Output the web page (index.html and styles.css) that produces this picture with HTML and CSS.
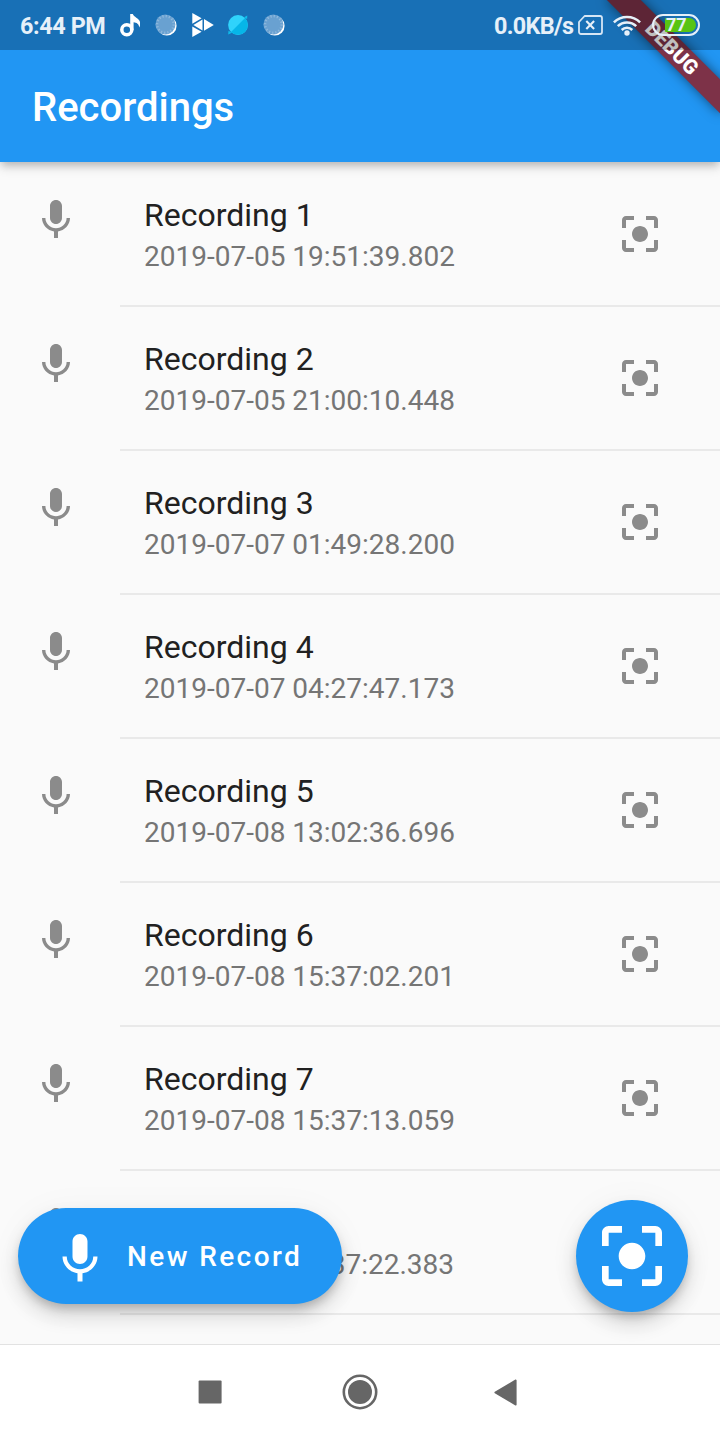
FILE: index.html
```
<!DOCTYPE html>
<html lang="en">
<head>
<meta charset="utf-8">
<title>Recordings</title>
<link rel="stylesheet" href="styles.css">
</head>
<body>
<svg class="defs" aria-hidden="true">
  <symbol id="mic" viewBox="0 0 24 24"><path d="M12 14c1.66 0 2.99-1.34 2.99-3L15 5c0-1.66-1.34-3-3-3S9 3.34 9 5v6c0 1.66 1.34 3 3 3zm5.3-3c0 3-2.54 5.1-5.3 5.1S6.7 14 6.7 11H5c0 3.41 2.72 6.23 6 6.72V21h2v-3.28c3.28-.48 6-3.3 6-6.72h-1.7z"/></symbol>
  <symbol id="focus" viewBox="0 0 24 24"><path d="M12 8c-2.21 0-4 1.79-4 4s1.79 4 4 4 4-1.79 4-4-1.79-4-4-4zm-7 7H3v4c0 1.1.9 2 2 2h4v-2H5v-4zM5 5h4V3H5c-1.1 0-2 .9-2 2v4h2V5zm14-2h-4v2h4v4h2V5c0-1.1-.9-2-2-2zm0 16h-4v2h4c1.1 0 2-.9 2-2v-4h-2v4z"/></symbol>
  <symbol id="moon" viewBox="0 0 22 22">
    <circle cx="11.8" cy="11.8" r="9.8" fill="#fff"/>
    <circle cx="10.4" cy="10.4" r="10" fill="#69a1d1"/>
    <circle cx="10.4" cy="10.4" r="8.3" fill="none" stroke="#8fb9dd" stroke-width="2.4" stroke-dasharray="1.2 2.06"/>
  </symbol>
</svg>
<div class="screen">
  <header class="top">
    <div class="status">
      <div class="status-side">
        <span class="clock">6:44 PM</span>
        <svg class="ic-note" viewBox="0 0 20 23"><circle cx="6.8" cy="15.7" r="5" fill="none" stroke="#fff" stroke-width="3.5"/><path d="M10.2 0h2.6c1 3.4 7.4 4.3 7.4 9.4 0 1.7-.3 3-.9 4.2-.4-3.6-2.6-5-5.7-5.3v8h-3.4z" fill="#fff"/></svg>
        <svg class="ic-moon"><use href="#moon"/></svg>
        <svg class="ic-play" viewBox="0 0 22 24"><path d="M.3 0 9.6 5.2.3 10.7zM.3 13.4l9.3 5.3L.3 24zM10.5 6.5v11L1.4 12zM12 6.1 21.8 12 12 17.8z" fill="#fff"/></svg>
        <svg class="ic-planet" viewBox="0 0 20 20"><circle cx="10" cy="10" r="9.9" fill="#2fd3fb"/><path d="M17 3a9.9 9.9 0 0 1-14 14z" fill="#06b6e8"/><path d="M16 2.2 19.3.4l-.2 3.7zM4 17.8.2 19.6l.3-3.8z" fill="#0fbdec"/></svg>
        <svg class="ic-moon"><use href="#moon"/></svg>
      </div>
      <div class="status-side">
        <span class="speed">0.0KB/s</span>
        <svg class="ic-sim" viewBox="0 0 25 20"><path d="M6.6 1H22a2 2 0 0 1 2 2v14a2 2 0 0 1-2 2H3a2 2 0 0 1-2-2V7z" fill="none" stroke="#d6e6f5" stroke-width="1.8" stroke-linejoin="round"/><path d="m8.3 6 7.8 8m0-8-7.8 8" stroke="#e6f0f9" stroke-width="2.1"/></svg>
        <svg class="ic-wifi" viewBox="0 0 28 21"><g fill="none" stroke="#e6f0f9" stroke-width="2.5"><path d="M.9 7.4a18.5 18.5 0 0 1 26.2 0"/><path d="M4.8 11.2a13 13 0 0 1 18.4 0"/><path d="M8.7 15a7.5 7.5 0 0 1 10.6 0"/></g><circle cx="14" cy="18" r="2.7" fill="#e6f0f9"/></svg>
        <div class="battery"><span class="battery-fill">77</span></div>
      </div>
    </div>
    <h1 class="title">Recordings</h1>
    <div class="banner-clip"><div class="banner">DEBUG</div></div>
    <div class="status-tint"></div>
  </header>

  <main class="list">
    <div class="row"><svg class="mic"><use href="#mic"/></svg><div class="body"><div class="texts"><div class="name">Recording 1</div><div class="date">2019-07-05 19:51:39.802</div></div><svg class="focus"><use href="#focus"/></svg></div></div>
    <div class="row"><svg class="mic"><use href="#mic"/></svg><div class="body"><div class="texts"><div class="name">Recording 2</div><div class="date">2019-07-05 21:00:10.448</div></div><svg class="focus"><use href="#focus"/></svg></div></div>
    <div class="row"><svg class="mic"><use href="#mic"/></svg><div class="body"><div class="texts"><div class="name">Recording 3</div><div class="date">2019-07-07 01:49:28.200</div></div><svg class="focus"><use href="#focus"/></svg></div></div>
    <div class="row"><svg class="mic"><use href="#mic"/></svg><div class="body"><div class="texts"><div class="name">Recording 4</div><div class="date">2019-07-07 04:27:47.173</div></div><svg class="focus"><use href="#focus"/></svg></div></div>
    <div class="row"><svg class="mic"><use href="#mic"/></svg><div class="body"><div class="texts"><div class="name">Recording 5</div><div class="date">2019-07-08 13:02:36.696</div></div><svg class="focus"><use href="#focus"/></svg></div></div>
    <div class="row"><svg class="mic"><use href="#mic"/></svg><div class="body"><div class="texts"><div class="name">Recording 6</div><div class="date">2019-07-08 15:37:02.201</div></div><svg class="focus"><use href="#focus"/></svg></div></div>
    <div class="row"><svg class="mic"><use href="#mic"/></svg><div class="body"><div class="texts"><div class="name">Recording 7</div><div class="date">2019-07-08 15:37:13.059</div></div><svg class="focus"><use href="#focus"/></svg></div></div>
    <div class="row"><svg class="mic"><use href="#mic"/></svg><div class="body"><div class="texts"><div class="name">&nbsp;</div><div class="date date-end">37:22.383</div></div></div></div>
  </main>

  <button class="fab-new"><svg class="fab-mic"><use href="#mic"/></svg><span class="fab-label">New Record</span></button>
  <button class="fab-focus" aria-label="Focus"><svg class="fab-focus-icon"><use href="#focus"/></svg></button>

  <nav class="nav">
    <svg class="nav-square" viewBox="0 0 24 24"><rect x=".6" y=".5" width="23" height="23" rx="1" fill="#666"/></svg>
    <svg class="nav-circle" viewBox="0 0 36 36"><circle cx="18" cy="18" r="16.2" fill="none" stroke="#666" stroke-width="2.6"/><circle cx="18" cy="18" r="12" fill="#666"/></svg>
    <svg class="nav-back" viewBox="0 0 23 27"><path d="M21.8 1.3v24.4L1.2 13.5z" fill="#666" stroke="#666" stroke-width="1.6" stroke-linejoin="round"/></svg>
  </nav>
</div>
</body>
</html>
```
FILE: styles.css
```
* { box-sizing: border-box; }
body { margin: 0; font-family: Roboto, "Noto Sans", sans-serif; }
svg { display: block; flex: none; }
.defs { position: absolute; width: 0; height: 0; }
.screen {
  position: relative;
  display: flex;
  flex-direction: column;
  width: 720px;
  height: 1440px;
  overflow: hidden;
  background: #fafafa;
}

/* App bar and status bar */
.top {
  position: relative;
  z-index: 1;
  flex: none;
  height: 162px;
  background: #2196f3;
  box-shadow: 0 4px 8px -2px rgba(0,0,0,.2), 0 6px 10px rgba(0,0,0,.12);
}
.status {
  position: relative;
  z-index: 3;
  display: flex;
  justify-content: space-between;
  height: 50px;
  padding: 0 20px;
  color: #e6f0f9;
}
.status-side { display: flex; align-items: center; height: 50px; }
.clock, .speed { font-size: 23.4px; font-weight: 700; line-height: 28px; white-space: nowrap; padding-top: 2px; }
.clock { width: 100px; letter-spacing: -.4px; }
.speed { width: 84px; letter-spacing: -.7px; }
.ic-note { width: 20px; height: 23px; }
.ic-moon { width: 22px; height: 22px; margin-left: 15px; }
.ic-play { width: 22px; height: 24px; margin-left: 15px; }
.ic-planet { width: 20px; height: 20px; margin-left: 14px; }
.ic-sim { width: 25px; height: 20px; }
.ic-wifi { width: 28px; height: 21px; margin-left: 10px; }
.battery {
  width: 48px;
  height: 22px;
  margin-left: 11px;
  padding: 2px;
  border: 2px solid #e6f0f9;
  border-radius: 11px;
  margin-top: -1px;
}
.battery-fill {
  display: block;
  height: 14px;
  margin-left: 9px;
  padding-left: 1px;
  border-radius: 1px 7px 7px 1px;
  background: #58c413;
  font-size: 18px;
  font-weight: 700;
  line-height: 14px;
}
.title {
  margin: 0;
  padding: 1px 32px 0;
  color: #fff;
  font-size: 40px;
  font-weight: 500;
  line-height: 114px;
}
.banner-clip { position: absolute; inset: 0; z-index: 1; overflow: hidden; }
.banner {
  position: absolute;
  top: 56px;
  left: 640px;
  width: 160px;
  height: 24px;
  transform-origin: 80px -56px;
  transform: rotate(45deg);
  background: #7d3248;
  box-shadow: 0 0 12px rgba(0,0,0,.5);
  color: #fff;
  font-size: 20.4px;
  font-weight: 900;
  line-height: 24px;
  text-align: center;
}
.status-tint { position: absolute; z-index: 2; top: 0; left: 0; right: 0; height: 50px; background: rgba(0,0,0,.25); }

/* Recordings */
.list { flex: 1; min-height: 0; padding-top: 1px; overflow: hidden; }
.row { display: flex; height: 144px; }
.mic { width: 48px; height: 48px; margin: 33px 40px 0 32px; fill: #8b8b8b; }
.body {
  display: flex;
  flex: 1;
  justify-content: space-between;
  padding: 32px 56px 0 24px;
  border-bottom: 2px solid #e9e9e9;
}
.name { color: #212121; font-size: 32px; line-height: 40px; }
.date { color: #757575; font-size: 28px; line-height: 44px; }
.texts { width: 310px; white-space: nowrap; }
.date-end { text-align: right; }
.focus { width: 48px; height: 48px; margin-top: 15px; fill: #8b8b8b; }

/* Floating actions */
.fab-new, .fab-focus {
  position: absolute;
  z-index: 2;
  display: flex;
  align-items: center;
  padding: 0;
  border: 0;
  background: #2196f3;
  color: #fff;
  fill: #fff;
  box-shadow: 0 6px 10px -2px rgba(0,0,0,.2), 0 12px 20px rgba(0,0,0,.14), 0 2px 36px rgba(0,0,0,.04);
}
.fab-new {
  left: 18px;
  top: 1208px;
  width: 324px;
  height: 96px;
  padding-left: 32px;
  gap: 17px;
  border-radius: 48px;
  font: 500 28px/32px Roboto, sans-serif;
  letter-spacing: 2.4px;
  white-space: nowrap;
}
.fab-label { padding-top: 2px; }
.fab-mic { width: 60px; height: 60px; margin-top: 5px; }
.fab-focus { left: 576px; top: 1200px; width: 112px; height: 112px; justify-content: center; border-radius: 50%; }
.fab-focus-icon { width: 80px; height: 80px; }

/* System navigation */
.nav {
  position: relative;
  z-index: 3;
  display: flex;
  flex: none;
  align-items: center;
  height: 96px;
  padding: 0 0 1px 198px;
  border-top: 1px solid #e2e2e2;
  background: #fff;
}
.nav-square { width: 24px; height: 24px; }
.nav-circle { width: 36px; height: 36px; margin-left: 119.5px; }
.nav-back { width: 23px; height: 27px; margin-left: 116.5px; }
```
